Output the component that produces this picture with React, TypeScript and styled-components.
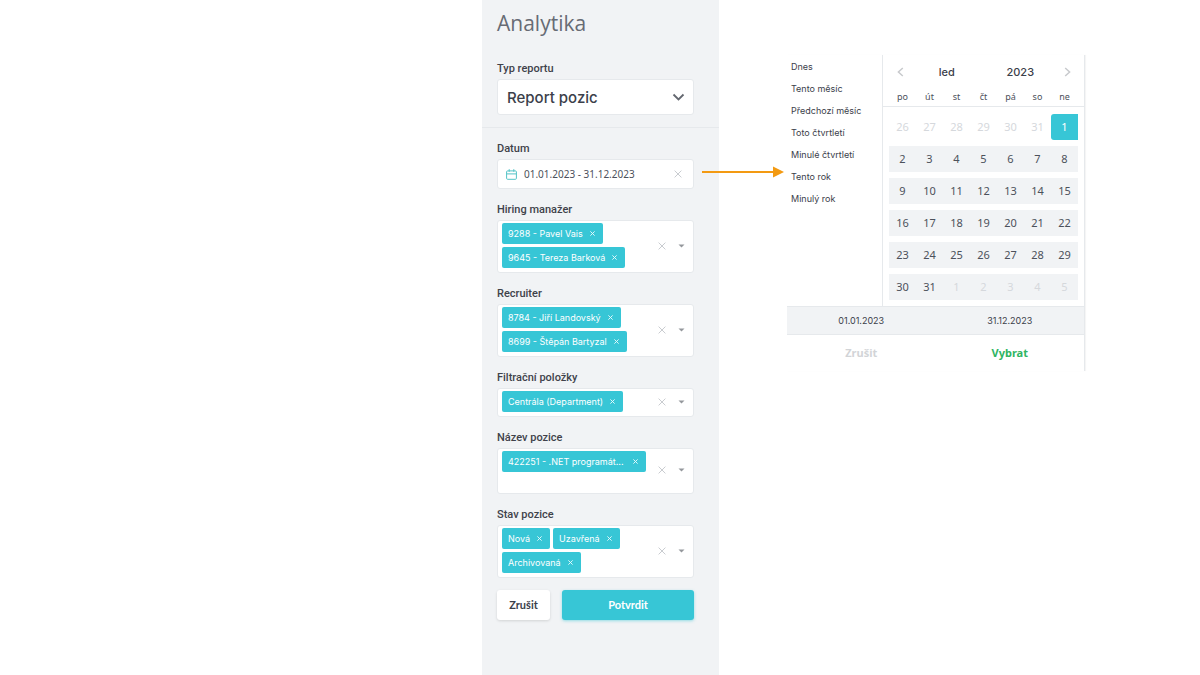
import React from "react";
import styled, { createGlobalStyle, css } from "styled-components";

const teal = "#37c6d6";
const border = "#e6e9ec";
const panel = "#f1f3f5";
const ui = `Inter, "Liberation Sans", sans-serif`;
const humanist = `"Noto Sans", "Open Sans", sans-serif`;

const GlobalStyle = createGlobalStyle`
  *, *::before, *::after { box-sizing: border-box; }
  body { margin: 0; background: #fff; font-family: ${ui}; color: #3b404a; }
  button, input, select { font: inherit; color: inherit; }
  button { padding: 0; border: 0; background: none; cursor: pointer; }
`;

const Page = styled.main`
  display: grid;
  grid-template-columns: minmax(0, 1fr) 237px 68px 298px 115px;
  min-height: 100vh;
`;

const Sidebar = styled.aside`
  grid-column: 2;
  padding: 8px 25px 24px 15px;
  background: ${panel};
`;

const Title = styled.h1`
  margin: 0 0 21px;
  font: 400 21px/30px "Open Sans", ${humanist};
  color: #676b74;
`;

const Divider = styled.hr`
  margin: 12px -25px 0 -15px;
  border: 0;
  border-top: 1px solid ${border};
`;

const Field = styled.div`
  position: relative;
  margin-top: 11px;
`;

const FirstField = styled(Field)`
  margin-top: 0;
`;

const Label = styled.label`
  display: block;
  font-family: Roboto, ${ui};
  font-size: 11px;
  font-weight: 500;
  line-height: 20px;
  color: #3f424a;
`;

const Box = styled.div`
  display: flex;
  align-items: center;
  border: 1px solid ${border};
  border-radius: 3px;
  background: #fff;
`;

const ReportBox = styled(Box)`
  position: relative;
  height: 36px;
`;

const ReportSelect = styled.select`
  width: 100%;
  height: 100%;
  padding: 0 32px 0 9px;
  border: 0;
  background: transparent;
  appearance: none;
  font-size: 15px;
  font-weight: 500;
`;

const SelectChevron = styled.svg`
  position: absolute;
  right: 8px;
  pointer-events: none;
`;

const DateBox = styled(Box)`
  height: 30px;
  padding: 0 11px 0 8px;
  gap: 7px;
`;

const DateInput = styled.input`
  flex: 1;
  min-width: 0;
  padding: 0;
  border: 0;
  background: transparent;
  font-family: ${humanist};
  font-size: 10px;
  color: #4c515b;
`;

const IconButton = styled.button`
  display: flex;
  align-items: center;
  justify-content: center;
`;

const Arrow = styled.svg`
  position: absolute;
  z-index: 1;
  left: calc(100% + 8px);
  top: 27px;
`;

const MultiBox = styled(Box)<{ $tall?: boolean }>`
  min-height: ${(p) => (p.$tall ? 46 : 29)}px;
  padding: 2px 6px 4px 4px;
`;

const Tags = styled.ul`
  display: flex;
  flex: 1;
  flex-wrap: wrap;
  align-self: flex-start;
  gap: 3px;
  margin: 0;
  padding: 0;
  list-style: none;
`;

const Tag = styled.li<{ $wide?: boolean }>`
  display: flex;
  align-items: center;
  gap: 7px;
  height: 21px;
  padding: 0 8px 0 6px;
  border-radius: 2px;
  background: ${teal};
  color: #fff;
  font-size: 9px;
  font-weight: 400;
  white-space: nowrap;
  ${(p) =>
    p.$wide &&
    css`
      width: 144px;
      justify-content: space-between;
    `}
`;

const Indicators = styled.div`
  display: flex;
  gap: 10px;
`;

const Actions = styled.div`
  display: flex;
  gap: 12px;
  margin-top: 12px;
`;

const ActionButton = styled.button<{ $primary?: boolean }>`
  height: 30px;
  padding-bottom: 2px;
  flex: ${(p) => (p.$primary ? "1" : "0 0 53px")};
  border-radius: 3px;
  background: ${(p) => (p.$primary ? teal : "#fff")};
  color: ${(p) => (p.$primary ? "#fff" : "#3b404a")};
  box-shadow: 0 1px 3px ${(p) => (p.$primary ? "#37c6d680" : "#00000022")};
  font-family: Lato, ${ui};
  font-size: 11px;
  font-weight: 700;
`;

const Picker = styled.section`
  grid-column: 4;
  align-self: start;
  margin-top: 55px;
  border-right: 1px solid ${border};
  box-shadow: 1px 0 1px #0000000a;
`;

const PickerBody = styled.div`
  display: flex;
`;

const Presets = styled.ul`
  flex: 1;
  margin: 0;
  padding: 0 0 0 4px;
  list-style: none;
`;

const Preset = styled.button`
  display: block;
  height: 22px;
  font-size: 9px;
  white-space: nowrap;
`;

const Calendar = styled.div`
  width: 202px;
  border-left: 1px solid ${border};
`;

const MonthBar = styled.div`
  display: grid;
  grid-template-columns: 20px 1fr 1fr 20px;
  height: 33px;
  padding: 0 7px;
  font-size: 11px;
  font-weight: 500;
`;

const Weeks = styled.table`
  width: 100%;
  border-collapse: collapse;
  table-layout: fixed;
  font-family: ${humanist};
  color: #4c515b;
`;

const WeekdayRow = styled.tr`
  height: 18px;
  border-bottom: 1px solid ${border};
`;

const Weekday = styled.th`
  padding: 0;
  font-size: 9px;
  font-weight: 400;
  text-align: center;
`;

const Edge = styled.td`
  width: 6px;
  padding: 0;
`;

const DayCell = styled.td`
  height: 32px;
  padding: 3px 0;
`;

const Day = styled.button<{ $kind: "range" | "mutedRange" | "muted" | "start" }>`
  display: block;
  width: 100%;
  height: 26px;
  font-size: 11px;
  line-height: 25px;
  background: ${(p) => ({ range: panel, mutedRange: panel, muted: "none", start: teal })[p.$kind]};
  color: ${(p) => ({ range: "#4c515b", mutedRange: "#d5d8dc", muted: "#d5d8dc", start: "#fff" })[p.$kind]};
  border-radius: ${(p) => (p.$kind === "start" ? "3px 0 0 3px" : "0")};
`;

const WeekBody = styled.tbody`
  &::before {
    content: "";
    display: block;
    height: 4px;
  }
  &::after {
    content: "";
    display: block;
    height: 3px;
  }
`;

const RangeBar = styled.div`
  display: grid;
  grid-template-columns: 1fr 1fr;
  height: 29px;
  align-items: center;
  border: 1px solid ${border};
  border-width: 1px 0;
  background: ${panel};
  font-size: 9px;
  text-align: center;
`;

const PickerActions = styled.div`
  display: grid;
  grid-template-columns: 1fr 1fr;
  height: 36px;
`;

const PickerAction = styled.button<{ $confirm?: boolean }>`
  font: 700 11px/36px ${humanist};
  color: ${(p) => (p.$confirm ? "#2fb563" : "#d2d4d7")};
`;

function Cross({ size, color }: { size: number; color: string }) {
  return (
    <svg width={size} height={size} viewBox="0 0 8 8" aria-hidden="true">
      <path d="M.6.6l6.8 6.8M7.4.6L.6 7.4" stroke={color} strokeWidth={size < 7 ? 1.5 : 1} fill="none" />
    </svg>
  );
}

function MultiSelect({ id, label, tags, tall }: { id: string; label: string; tags: string[]; tall?: boolean }) {
  return (
    <Field>
      <Label htmlFor={id}>{label}</Label>
      <MultiBox $tall={tall}>
        <Tags>
          {tags.map((tag) => (
            <Tag key={tag} $wide={tall}>
              {tag}
              <IconButton type="button" aria-label={`Odebrat ${tag}`}>
                <Cross size={5} color="#e6fafc" />
              </IconButton>
            </Tag>
          ))}
        </Tags>
        <Indicators>
          <IconButton type="button" aria-label="Vymazat">
            <Cross size={8} color="#c9ccd0" />
          </IconButton>
          <IconButton id={id} type="button">
            <svg width="11" height="8" viewBox="0 0 11 8" aria-hidden="true">
              <path d="M2.5 2.5h6L5.5 5.6z" fill="#94979c" />
            </svg>
          </IconButton>
        </Indicators>
      </MultiBox>
    </Field>
  );
}

function Chevron({ left }: { left?: boolean }) {
  return (
    <svg width="7" height="10" viewBox="0 0 7 10" aria-hidden="true">
      <path d={left ? "M5.8 1L1.4 5l4.4 4" : "M1.2 1l4.4 4-4.4 4"} stroke="#c8cacd" strokeWidth="1.5" fill="none" />
    </svg>
  );
}

const presets = ["Dnes", "Tento měsíc", "Předchozí měsíc", "Toto čtvrtletí", "Minulé čtvrtletí", "Tento rok", "Minulý rok"];
const weekdays = ["po", "út", "st", "čt", "pá", "so", "ne"];
const weeks = Array.from({ length: 6 }, (_, w) => Array.from({ length: 7 }, (_, d) => w * 7 + d - 5));

function dayInfo(n: number) {
  if (n < 1) return { text: n + 31, kind: "muted" as const };
  if (n === 1) return { text: n, kind: "start" as const };
  if (n > 31) return { text: n - 31, kind: "mutedRange" as const };
  return { text: n, kind: "range" as const };
}

export default function App() {
  return (
    <>
      <GlobalStyle />
      <Page>
        <Sidebar>
          <Title>Analytika</Title>
          <FirstField>
            <Label htmlFor="report">Typ reportu</Label>
            <ReportBox>
              <ReportSelect id="report">
                <option>Report pozic</option>
              </ReportSelect>
              <SelectChevron width="13" height="9" viewBox="0 0 13 9" aria-hidden="true">
                <path d="M1.5 1.5l5 5 5-5" stroke="#63676f" strokeWidth="1.8" fill="none" />
              </SelectChevron>
            </ReportBox>
          </FirstField>
          <Divider />
          <Field>
            <Label htmlFor="date">Datum</Label>
            <DateBox>
              <svg width="11" height="11" viewBox="0 0 11 11" aria-hidden="true">
                <path
                  d="M1.6 1.9h7.8q1 0 1 1v6.4q0 1-1 1H1.6q-1 0-1-1V2.900q0-1 1-1zM.6 4.900h9.800M3.200.2v2.600M7.800.2v2.600"
                  stroke="#53c3c6"
                  fill="none"
                />
              </svg>
              <DateInput id="date" defaultValue="01.01.2023 - 31.12.2023" />
              <IconButton type="button" aria-label="Vymazat datum">
                <Cross size={8} color="#c9ccd0" />
              </IconButton>
            </DateBox>
            <Arrow width="83" height="12" viewBox="0 0 83 12" aria-hidden="true">
              <path d="M0 6h74" stroke="#f39a12" strokeWidth="2" />
              <path d="M71 0.500L82 6 71 11.500z" fill="#f39a12" />
            </Arrow>
          </Field>
          <MultiSelect id="manager" label="Hiring manažer" tags={["9288 - Pavel Vais", "9645 - Tereza Barková"]} />
          <MultiSelect id="recruiter" label="Recruiter" tags={["8784 - Jiří Landovský", "8699 - Štěpán Bartyzal"]} />
          <MultiSelect id="filters" label="Filtrační položky" tags={["Centrála (Department)"]} />
          <MultiSelect id="position" label="Název pozice" tags={["422251 - .NET programát..."]} tall />
          <MultiSelect id="state" label="Stav pozice" tags={["Nová", "Uzavřená", "Archivovaná"]} />
          <Actions>
            <ActionButton type="button">Zrušit</ActionButton>
            <ActionButton type="button" $primary>
              Potvrdit
            </ActionButton>
          </Actions>
        </Sidebar>

        <Picker aria-label="Výběr období">
          <PickerBody>
            <Presets>
              {presets.map((name) => (
                <li key={name}>
                  <Preset type="button">{name}</Preset>
                </li>
              ))}
            </Presets>
            <Calendar>
              <MonthBar>
                <IconButton type="button" aria-label="Předchozí">
                  <Chevron left />
                </IconButton>
                <button type="button">led</button>
                <button type="button">2023</button>
                <IconButton type="button" aria-label="Další">
                  <Chevron />
                </IconButton>
              </MonthBar>
              <Weeks>
                <thead>
                  <WeekdayRow>
                    <Edge as="th" />
                    {weekdays.map((d) => (
                      <Weekday key={d} scope="col">
                        {d}
                      </Weekday>
                    ))}
                    <Edge as="th" />
                  </WeekdayRow>
                </thead>
                <WeekBody>
                  {weeks.map((week) => (
                    <tr key={week[0]}>
                      <Edge />
                      {week.map((n) => {
                        const { text, kind } = dayInfo(n);
                        return (
                          <DayCell key={n}>
                            <Day type="button" $kind={kind}>
                              {text}
                            </Day>
                          </DayCell>
                        );
                      })}
                      <Edge />
                    </tr>
                  ))}
                </WeekBody>
              </Weeks>
            </Calendar>
          </PickerBody>
          <RangeBar>
            <span>01.01.2023</span>
            <span>31.12.2023</span>
          </RangeBar>
          <PickerActions>
            <PickerAction type="button">Zrušit</PickerAction>
            <PickerAction type="button" $confirm>
              Vybrat
            </PickerAction>
          </PickerActions>
        </Picker>
      </Page>
    </>
  );
}
